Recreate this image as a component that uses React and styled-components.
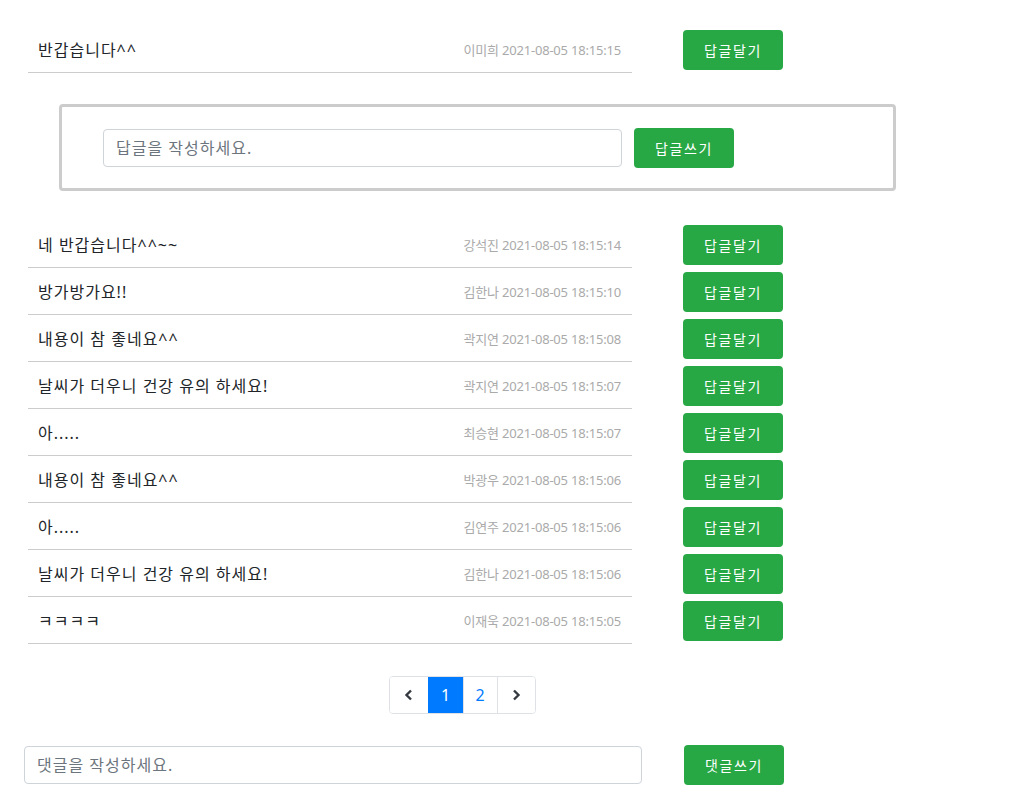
import React from "react";
import styled, { createGlobalStyle } from "styled-components";

const Global = createGlobalStyle`
  body {
    margin: 8px;
    background: #fff;
    font-family: "Noto Sans", "Noto Sans CJK KR", sans-serif;
    color: #212529;
  }
  * { box-sizing: border-box; }
`;

const Page = styled.div`
  width: 908px;
  padding-top: 18px;
`;

const List = styled.div`
  display: flex;
  flex-direction: column;
`;

const Row = styled.div`
  display: flex;
  align-items: flex-start;
  margin-left: 20px;
`;

const Item = styled.div`
  width: 604px;
  height: 47px;
  border-bottom: 1px solid #cccccc;
  display: flex;
  align-items: center;
  justify-content: space-between;
  padding: 0 11px 0 10px;
`;

const Content = styled.span`
  font-size: 16px;
  letter-spacing: 1px;
`;

const Meta = styled.span`
  font-size: 13px;
  color: #aaaaaa;
  letter-spacing: -0.2px;
`;

const GreenButton = styled.button`
  width: 100px;
  height: 40px;
  border: none;
  border-radius: 4px;
  background: #28a745;
  color: #fff;
  font-family: inherit;
  font-size: 14px;
  letter-spacing: 1.6px;
  cursor: pointer;
  margin-top: ${(p) => p.$mt || 0}px;
  margin-left: ${(p) => p.$ml || 0}px;
  flex-shrink: 0;
`;

const ReplyBox = styled.div`
  margin: 31px 0 30px 51px;
  width: 837px;
  height: 87px;
  border: 3px solid #cccccc;
  border-radius: 4px;
  display: flex;
  align-items: center;
  padding-left: 41px;
`;

const TextInput = styled.input`
  width: ${(p) => p.$w}px;
  height: 38px;
  border: 1px solid #ced4da;
  border-radius: 4px;
  padding: 0 12px;
  font-family: inherit;
  font-size: 16px;
  letter-spacing: 1px;
  color: #495057;
  &::placeholder { color: #6c757d; }
`;

const PagerWrap = styled.div`
  display: flex;
  justify-content: center;
  margin-top: 32px;
`;

const Pager = styled.div`
  display: flex;
  border: 1px solid #dee2e6;
  border-radius: 4px;
  overflow: hidden;
  height: 38px;
`;

const PageCell = styled.div`
  width: ${(p) => p.$w}px;
  display: flex;
  align-items: center;
  justify-content: center;
  font-size: 16px;
  color: ${(p) => (p.$active ? "#fff" : "#007bff")};
  background: ${(p) => (p.$active ? "#007bff" : "#fff")};
  border-left: ${(p) => (p.$first ? "none" : "1px solid #dee2e6")};
  ${(p) => p.$active && "border-left-color: #007bff;"}
`;

const Bottom = styled.div`
  display: flex;
  align-items: center;
  margin: 31px 0 0 16px;
`;

const rows = [
  ["네 반갑습니다^^~~", "강석진 2021-08-05 18:15:14"],
  ["방가방가요!!", "김한나 2021-08-05 18:15:10"],
  ["내용이 참 좋네요^^", "곽지연 2021-08-05 18:15:08"],
  ["날씨가 더우니 건강 유의 하세요!", "곽지연 2021-08-05 18:15:07"],
  ["아.....", "최승현 2021-08-05 18:15:07"],
  ["내용이 참 좋네요^^", "박광우 2021-08-05 18:15:06"],
  ["아.....", "김연주 2021-08-05 18:15:06"],
  ["날씨가 더우니 건강 유의 하세요!", "김한나 2021-08-05 18:15:06"],
  ["ㅋㅋㅋㅋ", "이재욱 2021-08-05 18:15:05"],
];

const Chevron = ({ dir }) => (
  <svg width="10" height="12" viewBox="0 0 10 12">
    <path
      d={dir === "left" ? "M7 1.5 L2.5 6 L7 10.5" : "M3 1.5 L7.5 6 L3 10.5"}
      fill="none"
      stroke="#343a40"
      strokeWidth="2.4"
    />
  </svg>
);

const CommentRow = ({ text, meta }) => (
  <Row>
    <Item>
      <Content>{text}</Content>
      <Meta>{meta}</Meta>
    </Item>
    <GreenButton $mt={4} $ml={51}>답글달기</GreenButton>
  </Row>
);

export default function App() {
  return (
    <Page>
      <Global />
      <List>
        <CommentRow text="반갑습니다^^" meta="이미희 2021-08-05 18:15:15" />
      </List>
      <ReplyBox>
        <TextInput $w={519} placeholder="답글을 작성하세요." />
        <GreenButton $ml={12}>답글쓰기</GreenButton>
      </ReplyBox>
      <List>
        {rows.map(([t, m], i) => (
          <CommentRow key={i} text={t} meta={m} />
        ))}
      </List>
      <PagerWrap>
        <Pager>
          <PageCell $w={38} $first>
            <Chevron dir="left" />
          </PageCell>
          <PageCell $w={35} $active>1</PageCell>
          <PageCell $w={34}>2</PageCell>
          <PageCell $w={38}>
            <Chevron dir="right" />
          </PageCell>
        </Pager>
      </PagerWrap>
      <Bottom>
        <TextInput $w={618} placeholder="댓글을 작성하세요." />
        <GreenButton $ml={42}>댓글쓰기</GreenButton>
      </Bottom>
    </Page>
  );
}
